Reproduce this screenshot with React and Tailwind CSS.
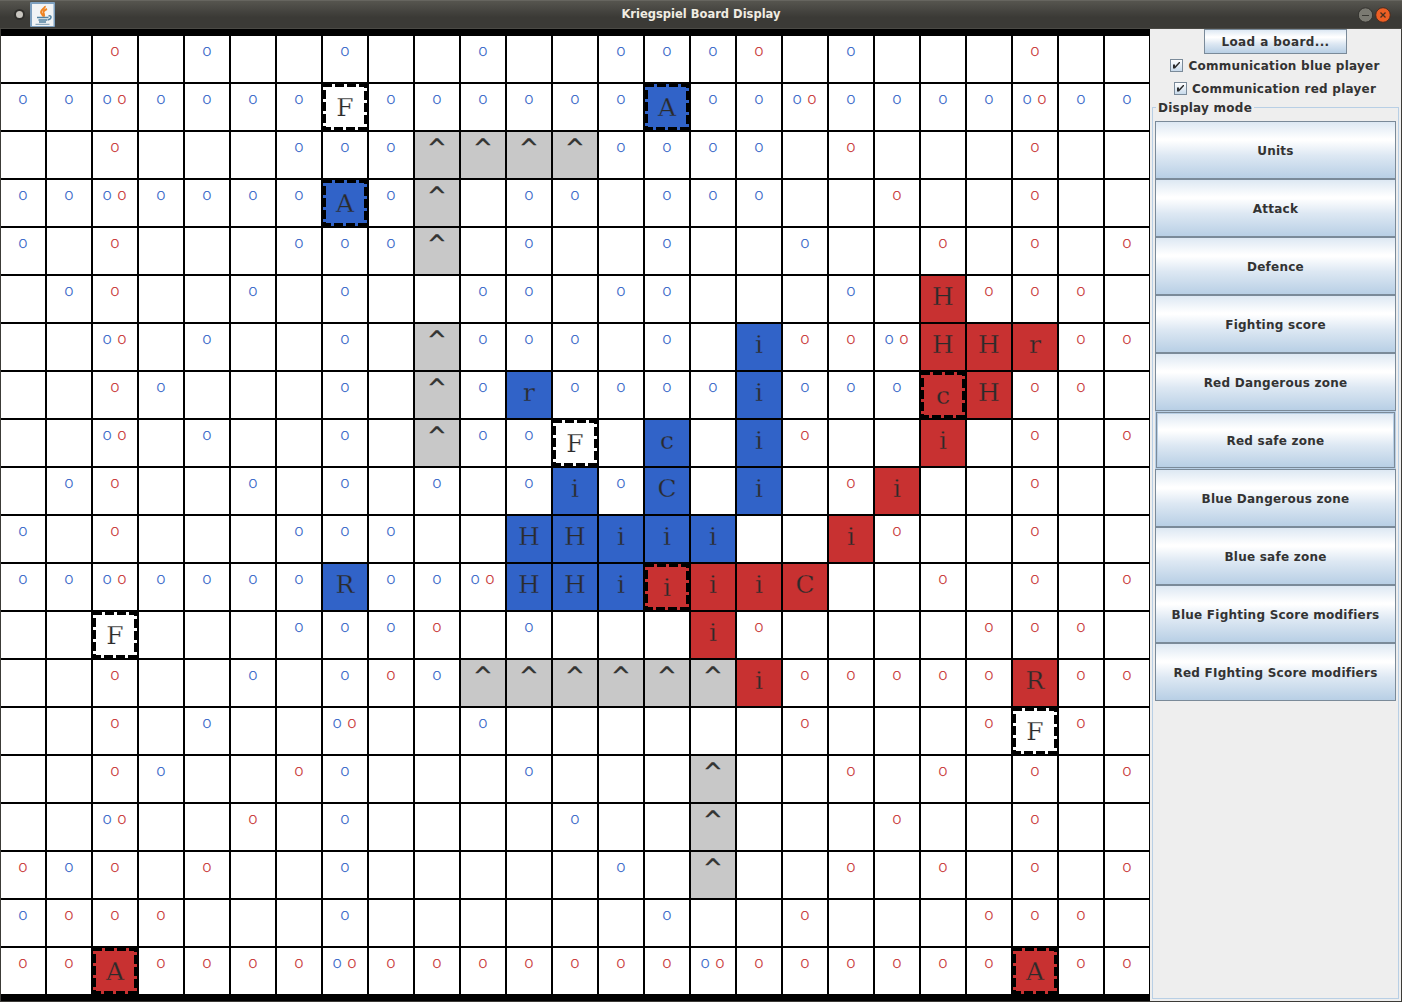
const MARKS = [
  '..r.b..b..b..bbbr.b...r..',
  'bbxbbbb.bbbbbb.bbxbbbbxbb',
  '..r...bbb^^^^bbbb.r...r..',
  'bbxbbbb.b^.bb.bbb..r..r..',
  'b.r...bbb^.b..b..b..r.r.r',
  '.br..b.b..bb.bb...b..rrr.',
  '..x.b..b.^bbb.b..rrx...rr',
  '..rb...b.^b.bbbb.bbb..rr.',
  '..x.b..b.^bb.....r....r.r',
  '.br..b.b.b.b.b....r...r..',
  'b.r...bbb..........r..r..',
  'bbxbbbb.bbx.........r.r.r',
  '......bbbr.b....r....rrr.',
  '..r..b.brb^^^^^^.rrrrr.rr',
  '..r.b..x..b......r...r.r.',
  '..rb..rb...b...^..r.r.r.r',
  '..x..r.b....b..^...r..r..',
  'rbr.r..b.....b.^..r.r.r.r',
  'brrr...b......b..r...rrr.',
  'rr.rrrrxrrrrrrrxrrrrrr.rr',
];

// "row,col": [side, letter, has dashed frame]
const UNITS = {
  '1,7': ['none', 'F', true],
  '8,12': ['none', 'F', true],
  '12,2': ['none', 'F', true],
  '14,22': ['none', 'F', true],
  '1,14': ['blue', 'A', true],
  '3,7': ['blue', 'A', true],
  '6,16': ['blue', 'i'],
  '7,16': ['blue', 'i'],
  '8,16': ['blue', 'i'],
  '9,16': ['blue', 'i'],
  '7,11': ['blue', 'r'],
  '8,14': ['blue', 'c'],
  '9,12': ['blue', 'i'],
  '9,14': ['blue', 'C'],
  '10,11': ['blue', 'H'],
  '10,12': ['blue', 'H'],
  '10,13': ['blue', 'i'],
  '10,14': ['blue', 'i'],
  '10,15': ['blue', 'i'],
  '11,7': ['blue', 'R'],
  '11,11': ['blue', 'H'],
  '11,12': ['blue', 'H'],
  '11,13': ['blue', 'i'],
  '5,20': ['red', 'H'],
  '6,20': ['red', 'H'],
  '6,21': ['red', 'H'],
  '6,22': ['red', 'r'],
  '7,20': ['red', 'c', true],
  '7,21': ['red', 'H'],
  '8,20': ['red', 'i'],
  '9,19': ['red', 'i'],
  '10,18': ['red', 'i'],
  '11,14': ['red', 'i', true],
  '11,15': ['red', 'i'],
  '11,16': ['red', 'i'],
  '11,17': ['red', 'C'],
  '12,15': ['red', 'i'],
  '13,16': ['red', 'i'],
  '13,22': ['red', 'R'],
  '19,2': ['red', 'A', true],
  '19,22': ['red', 'A', true],
};

const SIDE = {
  none: 'bg-white [-webkit-text-stroke:0.25px_#ffffff]',
  blue: 'bg-[#3163c8] [-webkit-text-stroke:0.3px_#3163c8]',
  red: 'bg-[#c83131] [-webkit-text-stroke:0.3px_#c83131]',
};

const BUTTONS = [
  'Units',
  'Attack',
  'Defence',
  'Fighting score',
  'Red Dangerous zone',
  'Red safe zone',
  'Blue Dangerous zone',
  'Blue safe zone',
  'Blue Fighting Score modifiers',
  'Red FIghting Score modifiers',
];

const GRADIENT = 'bg-[linear-gradient(#dde8f3_0%,#ffffff_30%,#ffffff_33%,#dde8f3_60%,#b8cfe5_100%)]';

function Unit({ side, letter, framed }) {
  return (
    <div className={`relative flex h-[46px] w-11 justify-center overflow-hidden font-['DejaVu_Serif',serif] text-[25px] font-normal text-[#2b2b2b] ${framed ? 'leading-[47px]' : 'leading-[41px]'} ${SIDE[side]}`}>
      {letter}
      {framed && (
        <svg className="absolute inset-0" width="44" height="46" shapeRendering="crispEdges">
          <rect x="1.5" y="1.5" width="41" height="43" fill="none" stroke="#000" strokeWidth="3" strokeDasharray="6 6" strokeLinecap="square" />
        </svg>
      )}
    </div>
  );
}

function Cell({ row, col, mark }) {
  const unit = UNITS[`${row},${col}`];
  if (unit) return <Unit side={unit[0]} letter={unit[1]} framed={unit[2]} />;
  if (mark === '^')
    return (
      <div className="flex h-[46px] w-11 justify-center bg-[#c8c8c8] font-['DejaVu_Sans',sans-serif] text-[23px] font-normal leading-[32px] text-[#333] [-webkit-text-stroke:0.4px_#333]">^</div>
    );
  return (
    <div className={`flex h-[46px] w-11 justify-center gap-[5px] bg-white font-['DejaVu_Sans',sans-serif] text-[16px] font-extralight leading-[29px] ${mark === 'x' ? 'pr-px' : ''}`}>
      {(mark === 'b' || mark === 'x') && <span className="text-[#3163c8] [-webkit-text-stroke:0.25px_#3163c8]">o</span>}
      {(mark === 'r' || mark === 'x') && <span className="text-[#c83131] [-webkit-text-stroke:0.25px_#c83131]">o</span>}
    </div>
  );
}

function Board() {
  return (
    <div className="h-[972px] w-[1149px] shrink-0 bg-black pt-[7px]">
      <div className="grid grid-cols-[repeat(25,44px)] gap-0.5">
        {MARKS.map((line, row) => [...line].map((mark, col) => <Cell key={`${row}-${col}`} row={row} col={col} mark={mark} />))}
      </div>
    </div>
  );
}

function Check({ label }) {
  return (
    <label className="flex h-[23px] items-center justify-center gap-[5px] pr-px">
      <span className="flex size-[13px] items-center justify-center border border-[#7a8a99] bg-linear-to-b from-white to-[#c8daeb]">
        <svg width="9" height="9" viewBox="0 0 9 9">
          <path d="M1 3.5h2v1.8L7 1h1v1L3 7.5H1z" fill="#2b2b2b" />
        </svg>
      </span>
      {label}
    </label>
  );
}

function ModeButton({ label, focused }) {
  if (focused)
    return (
      <button className="h-[58px] w-full border border-[#b8cfe5]">
        <span className={`flex size-full items-center justify-center border border-[#7a8a99] pt-px shadow-[inset_0_0_0_1px_#b8cfe5] ${GRADIENT}`}>{label}</span>
      </button>
    );
  return <button className={`flex h-[58px] w-full items-center justify-center border border-[#7a8a99] pt-px ${GRADIENT}`}>{label}</button>;
}

function Sidebar() {
  return (
    <aside className="flex w-[251px] flex-col bg-[#eeeeee] pb-[2px] text-[12px] tracking-[0.24px]">
      <button className={`ml-[54px] h-[25px] w-[143px] border border-[#7a8a99] tracking-[0.4px] ${GRADIENT}`}>Load a board...</button>
      <div className="pb-px">
        <Check label="Communication blue player" />
        <Check label="Communication red player" />
      </div>
      <section className="relative ml-[2px] mr-[2px] mt-[6px] flex-1 border border-[#b8cfe5] px-[2px] pt-[13px]">
        <h2 className="absolute -top-[9px] left-[3px] bg-[#eeeeee] px-0.5 leading-[18px]">Display mode</h2>
        {BUTTONS.map((label) => (
          <ModeButton key={label} label={label} focused={label === 'Red safe zone'} />
        ))}
      </section>
    </aside>
  );
}

function JavaIcon() {
  return (
    <svg width="25" height="25" viewBox="0 0 25 25">
      <rect width="25" height="25" rx="1" fill="#7d9fbf" />
      <rect x="2" y="2" width="21.500" height="22" fill="#f1f3f5" />
      <path d="M15 4c.5 2-4 3.500-4 6 0 2 2 2.500 2 4.500M17 7c-2 .8-4 2-3.500 4 .4 1.500 1.500 2 0 3.800" fill="none" stroke="#ee8322" strokeWidth="1.900" />
      <path d="M7 15.500h11.500M8.500 18h8.500M9 20h7M18.500 14c4-1 3 3.500-1 4" fill="none" stroke="#5382a1" strokeWidth="1.500" />
      <path d="M5.500 22.300h14" stroke="#7796ad" strokeWidth="1" />
    </svg>
  );
}

function TitleBar() {
  return (
    <header className="flex h-[29px] items-center border-b border-[#4b4a45] border-t border-t-[#66655f] bg-linear-to-b from-[#56554f] to-[#3b3a36] to-60% px-[11px]">
      <div className="flex w-[100px] items-center gap-[2px]">
        <span className="flex size-[17px] items-center justify-center">
          <span className="box-content size-[7px] rounded-full border-2 border-[#2f2e2b] bg-[#c9c6c0]" />
        </span>
        <JavaIcon />
      </div>
      <h1 className="flex-1 text-center text-[11.500px] text-[#f0ece2]">Kriegspiel Board Display</h1>
      <div className="flex w-[100px] justify-end gap-[2px]">
        <svg width="15" height="16" viewBox="0 0 15 16">
          <circle cx="7.500" cy="8" r="7.200" fill="#7b7a72" stroke="#34332f" />
          <path d="M4 8.500h7" stroke="#3a3934" />
        </svg>
        <svg width="16" height="16" viewBox="0 0 16 16">
          <circle cx="8" cy="8" r="7.300" fill="#ee5f24" stroke="#4a2d20" />
          <path d="M5.500 5.500l5 5M10.500 5.500l-5 5" stroke="#47301f" strokeWidth="1.300" />
        </svg>
      </div>
    </header>
  );
}

export default function App() {
  return (
    <div className="h-[1002px] w-[1402px] overflow-hidden bg-[#3c3b37] font-['DejaVu_Sans',sans-serif] text-[13px] font-bold text-[#333]">
      <TitleBar />
      <main className="flex h-[972px] pl-px">
        <Board />
        <Sidebar />
      </main>
    </div>
  );
}
